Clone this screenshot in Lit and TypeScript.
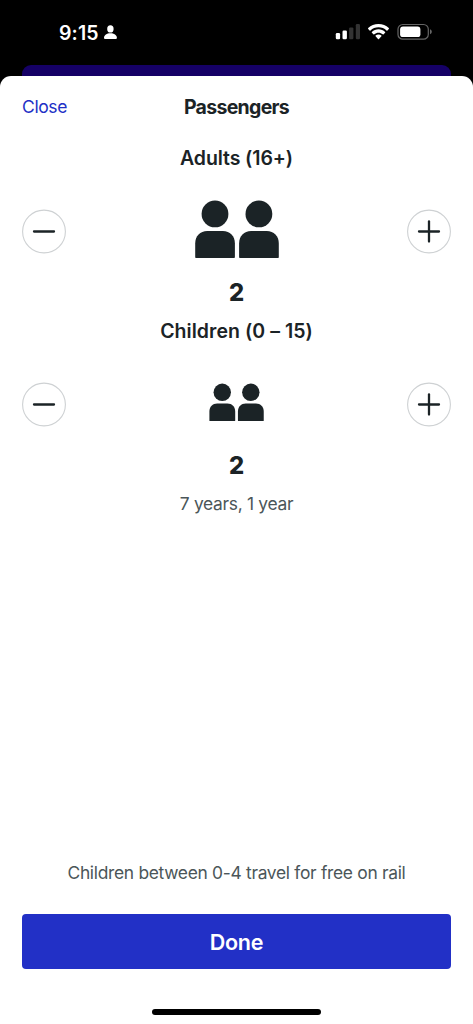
import { LitElement, html, css, svg } from "lit";
import { customElement, property, state } from "lit/decorators.js";

@customElement("status-bar")
class StatusBar extends LitElement {
  static styles = css`
    :host { display: flex; height: 65px; justify-content: space-between; background: #000; color: #fff; }
    .left { display: flex; padding-left: 59px; }
    .time { font-size: 19.5px; line-height: 24px; font-weight: 600; letter-spacing: 0.1px; margin-top: 21px; width: 45px; white-space: nowrap; }
    .person { margin-top: 25px; }
    svg { display: block; }
    .right { padding: 23px 40px 0 0; }
  `;
  render() {
    return html`
      <div class="left">
        <span class="time">9:15</span>
        <svg class="person" width="14" height="15" viewBox="0 0 14 15" fill="#fff">
          <ellipse cx="6.4" cy="3.9" rx="3.2" ry="3.6" />
          <path d="M0 12.6C0 10.2 2.8 8.2 6.4 8.2s6.5 2 6.5 4.4c0 1-.5 1.5-1.4 1.5H1.4C.5 14.1 0 13.6 0 12.6z" />
        </svg>
      </div>
      <svg class="right" width="98" height="18" viewBox="0 0 98 18" fill="none">
        <rect x="0.8" y="10" width="4.3" height="6.3" rx="1.2" fill="#fff" />
        <rect x="7.5" y="7.5" width="4.4" height="8.8" rx="1.2" fill="#fff" />
        <rect x="14.1" y="4.4" width="4.3" height="11.9" rx="1.2" fill="#333" />
        <rect x="20.8" y="1" width="4.2" height="15.3" rx="1.2" fill="#333" />
        <g fill="#fff">
          <path d="M43.5 1c4 0 7.6 1.5 10.3 4.1.3.3.3.6 0 .9l-1.4 1.5c-.3.3-.6.3-.9 0C49.4 5.5 46.6 4.3 43.5 4.3S37.6 5.5 35.5 7.5c-.3.3-.6.3-.9 0L33.2 6c-.3-.3-.3-.6 0-.9C35.9 2.5 39.5 1 43.5 1z" />
          <path d="M43.5 6.3c2.5 0 4.9 1 6.6 2.6.3.3.3.6 0 .9l-1.5 1.5c-.3.3-.6.3-.9 0-1.1-1-2.6-1.6-4.2-1.6s-3.1.6-4.2 1.6c-.3.3-.6.3-.9 0l-1.5-1.5c-.3-.3-.3-.6 0-.9 1.7-1.6 4.1-2.6 6.6-2.6z" />
          <path d="M43.5 11.4c1.1 0 2.1.4 2.9 1 .3.3.3.6 0 .9l-2.4 2.6c-.3.3-.7.3-1 0l-2.4-2.6c-.3-.3-.3-.6 0-.9.8-.6 1.8-1 2.9-1z" />
        </g>
        <rect x="63" y="1.5" width="30.3" height="14.7" rx="4.8" stroke="#666" stroke-width="1.2" />
        <rect x="65.1" y="3.6" width="20.3" height="10.5" rx="2.9" fill="#fff" />
        <path d="M95 6.3c1.2.4 1.8 1.4 1.8 2.5s-.6 2.1-1.8 2.5z" fill="#666" />
      </svg>
    `;
  }
}

@customElement("passenger-stepper")
class PassengerStepper extends LitElement {
  @property() label = "";
  @property() kind = "adult";
  @property({ type: Number }) count = 0;

  static styles = css`
    :host { display: block; height: 173px; }
    .label { height: 40px; line-height: 40px; text-align: center; font-size: 19.5px; font-weight: 600; white-space: nowrap; }
    .adult .label { letter-spacing: -0.1px; }
    .child .label { letter-spacing: 0.05px; }
    .row { height: 97px; display: flex; justify-content: space-between; align-items: flex-start; }
    button { width: 44px; height: 44px; margin-top: 31px; padding: 0; border: 0; background: none; color: inherit; }
    svg { display: block; overflow: visible; }
    .figures { margin-top: 22px; }
    .child .figures { margin-top: 32px; }
    .count { height: 36px; line-height: 36px; text-align: center; font-size: 23.8px; font-weight: 800; }
  `;

  private change(step: number) {
    this.count = Math.max(0, this.count + step);
  }

  private figures() {
    const scale = this.kind === "adult" ? 1 : 0.65;
    const width = Math.ceil((this.count * 43.8 + 1) * scale);
    const offset = this.kind === "adult" ? "translate(3.2 0)" : "translate(1.4 0.3) scale(0.65)";
    return html`<svg class="figures" width=${width} height="59" fill="#1b2326">
      <g transform=${offset}>
        ${Array.from({ length: this.count }, (_, i) => svg`<g transform="translate(${i * 43.9} 0)">
          <circle cx="19.8" cy="13.9" r="13.4" />
          <path d="M0 57.2V43.5C0 36 5 31.1 12 31.1h15.7c7 0 12 4.9 12 12.4v13.7q0 .8-.8.8H.8q-.8 0-.8-.8z" />
        </g>`)}
      </g>
    </svg>`;
  }

  private control(plus: boolean) {
    return html`<button aria-label=${plus ? "Add" : "Remove"} @click=${() => this.change(plus ? 1 : -1)}>
      <svg width="44" height="44" viewBox="0 0 44 44" fill="none">
        <circle cx="22" cy="22.5" r="21.4" stroke="#ced1d3" stroke-width="1.1" />
        <path d="M12 22.5H32" stroke="#1b2326" stroke-width="2.3" stroke-linecap="round" />
        ${plus ? svg`<path d="M22 12.5V32.5" stroke="#1b2326" stroke-width="2.3" stroke-linecap="round" />` : ""}
      </svg>
    </button>`;
  }

  render() {
    return html`<div class=${this.kind}>
      <div class="label">${this.label}</div>
      <div class="row">
        ${this.control(false)}
        ${this.figures()}
        ${this.control(true)}
      </div>
      <div class="count">${this.count}</div>
    </div>`;
  }
}

@customElement("app-root")
class AppRoot extends LitElement {
  @state() private ages = "7 years, 1 year";

  static styles = css`
    :host { display: flex; flex-direction: column; height: 1024px; background: #000; color: #1b2326; font-family: Inter, "Liberation Sans", sans-serif; overflow: hidden; }
    .behind { height: 11px; flex: none; margin: 0 22px; background: #150066; border-radius: 9px 9px 0 0; }
    .sheet { flex: 1; display: flex; flex-direction: column; background: #fff; border-radius: 11px 11px 0 0; padding: 0 22px; }
    header { height: 62px; display: grid; grid-template-columns: 1fr auto 1fr; align-items: center; }
    .close { font-size: 17.5px; letter-spacing: -0.4px; color: #2230c6; padding-bottom: 1px; }
    h1 { margin: 0; font-size: 19.5px; font-weight: 700; letter-spacing: -0.7px; }
    .ages, .note { text-align: center; color: #4b5659; font-size: 17.4px; letter-spacing: -0.3px; line-height: 40px; white-space: nowrap; }
    .space { flex: 1; }
    .done { height: 55px; margin-top: 21px; border: 0; border-radius: 4px; background: #2230c6; color: #fff; font: 600 21.5px Inter, sans-serif; letter-spacing: -0.2px; padding: 0; }
    .home { width: 169px; height: 6px; border-radius: 3px; background: #000; margin: 40px auto 9px; }
  `;

  render() {
    return html`
      <status-bar></status-bar>
      <div class="behind"></div>
      <main class="sheet">
        <header><span class="close">Close</span><h1>Passengers</h1><span></span></header>
        <passenger-stepper label="Adults (16+)" kind="adult" count="2"></passenger-stepper>
        <passenger-stepper label="Children (0 – 15)" kind="child" count="2"></passenger-stepper>
        <div class="ages">${this.ages}</div>
        <div class="space"></div>
        <div class="note">Children between 0-4 travel for free on rail</div>
        <button class="done">Done</button>
        <div class="home"></div>
      </main>
    `;
  }
}
